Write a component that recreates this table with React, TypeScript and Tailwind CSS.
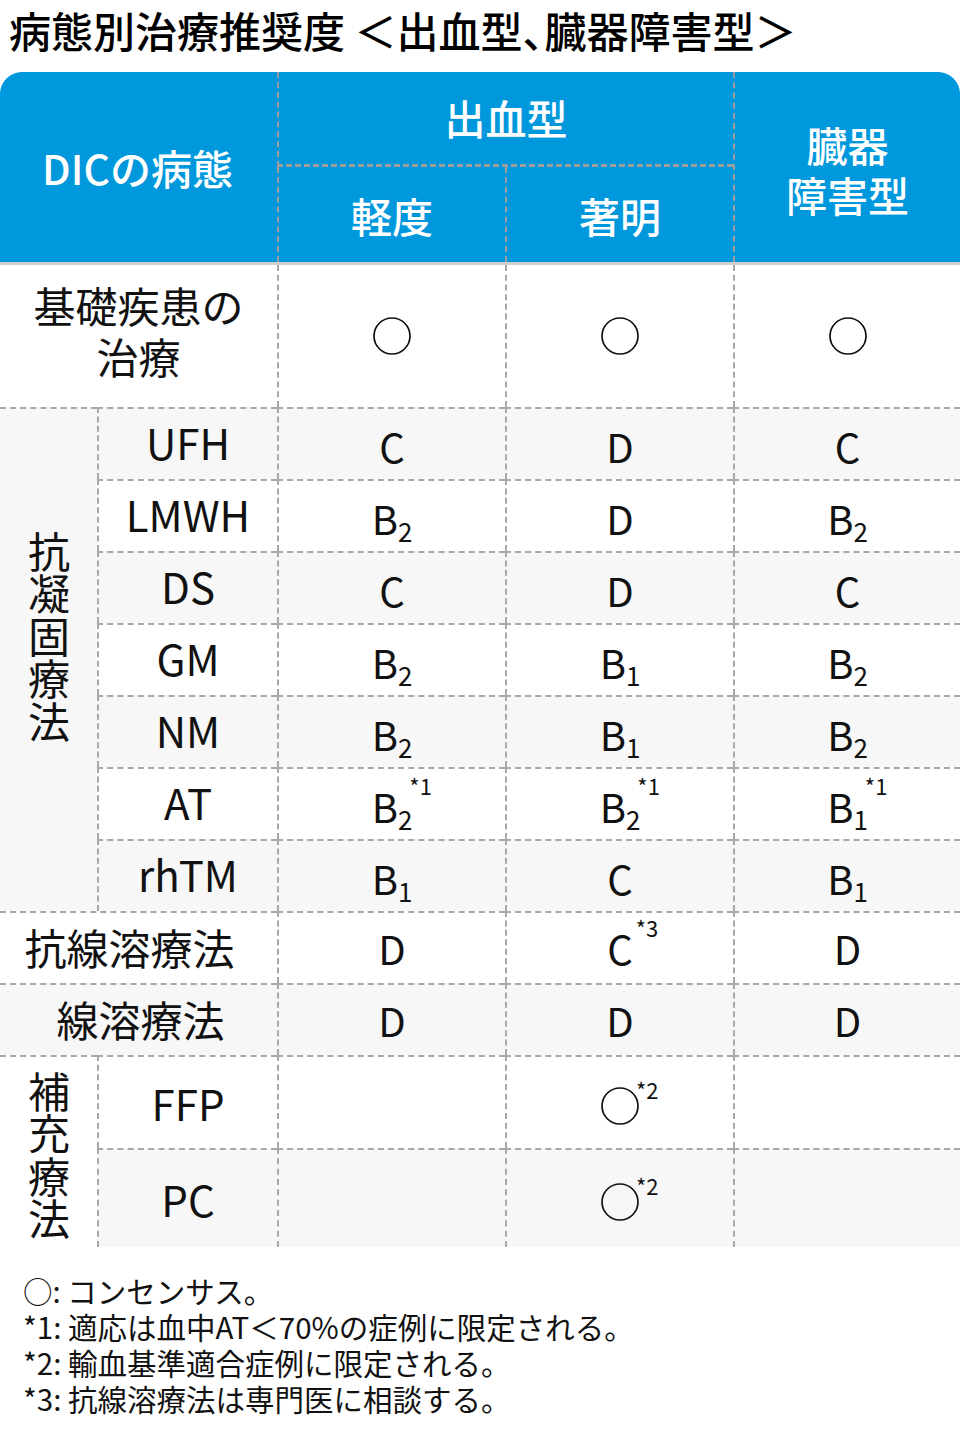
import React from 'react';
import clsx from 'clsx';

type G = { l: string; sub?: string; note?: string };

const anticoag: { name: string; vals: G[] }[] = [
  { name: 'UFH', vals: [{ l: 'C' }, { l: 'D' }, { l: 'C' }] },
  { name: 'LMWH', vals: [{ l: 'B', sub: '2' }, { l: 'D' }, { l: 'B', sub: '2' }] },
  { name: 'DS', vals: [{ l: 'C' }, { l: 'D' }, { l: 'C' }] },
  { name: 'GM', vals: [{ l: 'B', sub: '2' }, { l: 'B', sub: '1' }, { l: 'B', sub: '2' }] },
  { name: 'NM', vals: [{ l: 'B', sub: '2' }, { l: 'B', sub: '1' }, { l: 'B', sub: '2' }] },
  {
    name: 'AT',
    vals: [
      { l: 'B', sub: '2', note: '1' },
      { l: 'B', sub: '2', note: '1' },
      { l: 'B', sub: '1', note: '1' },
    ],
  },
  { name: 'rhTM', vals: [{ l: 'B', sub: '1' }, { l: 'C' }, { l: 'B', sub: '1' }] },
];

const Grade = ({ l, sub, note }: G) => (
  <span className="relative inline-block text-[40px] leading-none">
    {l}
    {sub && <span className="relative top-[7px] text-[26px]">{sub}</span>}
    {note && (
      <span
        className={clsx(
          'absolute left-full top-[-12px] text-[22px] leading-none',
          sub ? '-ml-[3px]' : 'ml-[3px]'
        )}
      >
        *{note}
      </span>
    )}
  </span>
);

const Circle = ({ note }: { note?: string }) => (
  <span className="relative inline-block">
    <svg width="38" height="38" viewBox="0 0 38 38" className="block">
      <circle cx="19" cy="19" r="18" fill="none" stroke="#111" strokeWidth="1.7" />
    </svg>
    {note && (
      <span className="absolute left-full -ml-[3px] top-[-9px] text-[22px] leading-none">*{note}</span>
    )}
  </span>
);

const Cell = ({
  children,
  top = true,
  left = true,
  gray = false,
  className,
}: {
  children?: React.ReactNode;
  top?: boolean;
  left?: boolean;
  gray?: boolean;
  className?: string;
}) => (
  <div
    className={clsx(
      'flex items-center justify-center border-dashed border-[#a8a8a8]',
      top && 'border-t-2',
      left && 'border-l-2',
      gray ? 'bg-[#f7f7f7]' : 'bg-white',
      className
    )}
  >
    {children}
  </div>
);

// 縦書きのグループ見出し
const Vertical = ({ text }: { text: string }) => (
  <span className="[writing-mode:vertical-rl] tracking-[0.5px] leading-none">{text}</span>
);

export default function App() {
  return (
    <div className="w-[960px] min-h-[1440px] bg-white text-[#111] font-['Noto_Sans_CJK_JP','Noto_Sans',sans-serif]">
      <h1 className="pl-[9px] pt-[8px] h-[72px] text-[42px] leading-[44px] font-medium text-black whitespace-nowrap">
        病態別治療推奨度 ＜出血型<span className="-mr-[20px]">、</span>臓器障害型＞
      </h1>

      {/* header */}
      <div className="grid grid-cols-[277px_228px_228px_227px] grid-rows-[95px_95px] bg-[#0098dc] rounded-t-[22px] border-b-[3px] border-[#cfcfcf] text-white text-[41px] font-medium">
        <div className="row-span-2 flex items-center justify-center pt-[2px] pr-[2px]">DICの病態</div>
        <div className="col-span-2 flex items-center justify-center border-l-2 border-b-[3px] border-dashed border-[#9e9e9e]">
          出血型
        </div>
        <div className="row-span-2 flex flex-col items-center justify-center border-l-2 border-dashed border-[#9e9e9e] leading-[50px] pt-[4px]">
          <span>臓器</span>
          <span>障害型</span>
        </div>
        <div className="flex items-center justify-center border-l-2 border-dashed border-[#9e9e9e] pt-[2px]">軽度</div>
        <div className="flex items-center justify-center border-l-2 border-dashed border-[#9e9e9e] pt-[2px]">著明</div>
      </div>

      {/* body */}
      <div className="grid grid-cols-[97px_180px_228px_228px_227px] grid-rows-[142px_repeat(9,72px)_93px_99px] text-[42px]">
        <Cell top={false} left={false} className="col-span-2 flex-col leading-[51px] pb-[12px]">
          <span>基礎疾患の</span>
          <span>治療</span>
        </Cell>
        <Cell top={false}>
          <Circle />
        </Cell>
        <Cell top={false}>
          <Circle />
        </Cell>
        <Cell top={false}>
          <Circle />
        </Cell>

        <Cell left={false} gray className="row-span-7 pb-[46px]">
          <Vertical text="抗凝固療法" />
        </Cell>
        {anticoag.map((r, i) => (
          <React.Fragment key={r.name}>
            <Cell gray={i % 2 === 0} className="pb-[6px]">
              {r.name}
            </Cell>
            {r.vals.map((v, j) => (
              <Cell key={j} gray={i % 2 === 0} className="pt-[3px]">
                <Grade {...v} />
              </Cell>
            ))}
          </React.Fragment>
        ))}

        <Cell left={false} className="col-span-2 pr-[18px] pb-[4px]">
          抗線溶療法
        </Cell>
        <Cell>
          <Grade l="D" />
        </Cell>
        <Cell>
          <Grade l="C" note="3" />
        </Cell>
        <Cell>
          <Grade l="D" />
        </Cell>

        <Cell left={false} gray className="col-span-2 pl-[4px] pb-[4px]">
          線溶療法
        </Cell>
        <Cell gray>
          <Grade l="D" />
        </Cell>
        <Cell gray>
          <Grade l="D" />
        </Cell>
        <Cell gray>
          <Grade l="D" />
        </Cell>

        <Cell left={false} className="row-span-2 pt-[8px]">
          <Vertical text="補充療法" />
        </Cell>
        <Cell>FFP</Cell>
        <Cell />
        <Cell className="pt-[6px]">
          <Circle note="2" />
        </Cell>
        <Cell />
        <Cell gray>PC</Cell>
        <Cell gray />
        <Cell gray className="pt-[6px]">
          <Circle note="2" />
        </Cell>
        <Cell gray />
      </div>

      {/* notes */}
      <div className="pl-[23px] pt-[25px] text-[29.5px] leading-[36px] text-[#111]">
        <p>○: コンセンサス。</p>
        <p>*1: 適応は血中AT＜70%の症例に限定される。</p>
        <p>*2: 輸血基準適合症例に限定される。</p>
        <p>*3: 抗線溶療法は専門医に相談する。</p>
      </div>
    </div>
  );
}
